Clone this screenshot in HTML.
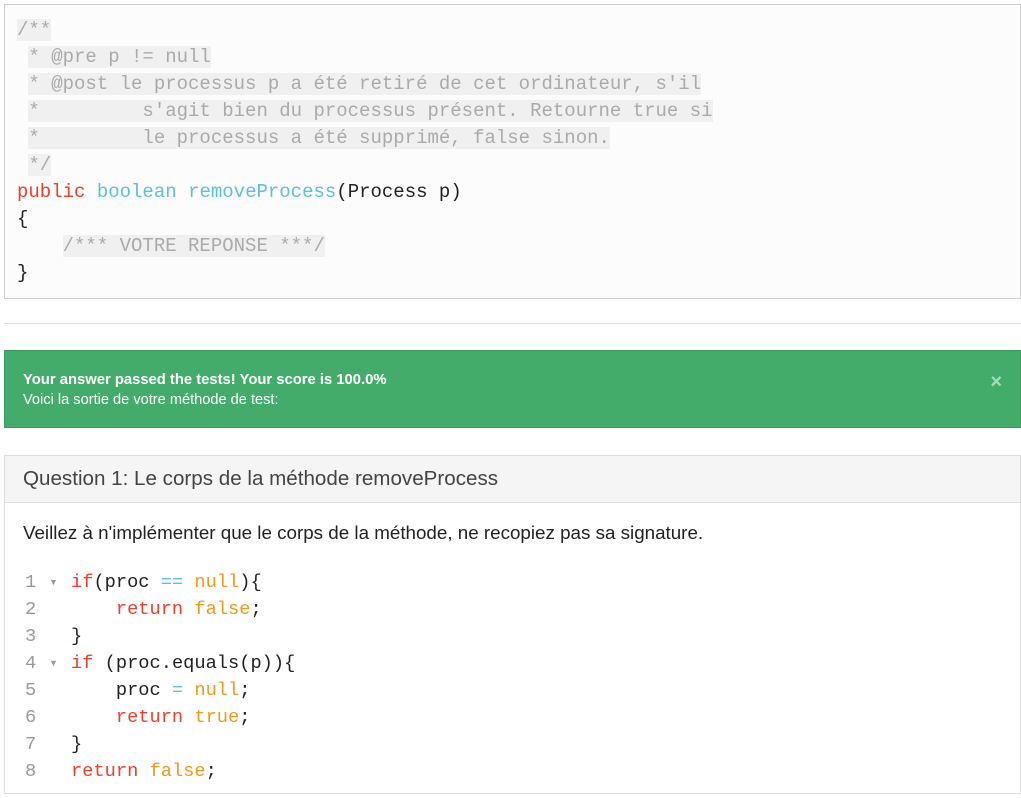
<!DOCTYPE html>
<html><head><meta charset="utf-8"><style>
body{margin:0;width:1021px;height:798px;background:#fff;position:relative;overflow:hidden;font-family:"Liberation Sans",sans-serif}
.mono{font-family:"Liberation Mono","DejaVu Sans Mono",monospace;font-size:19px;white-space:pre}
.m2{font-size:18.7px}
.box{position:absolute;left:4px;top:4px;width:1015px;height:293px;border:1px solid #ccc;background:#fcfcfc}
.l{position:absolute;height:27px;line-height:27px}
.c{color:#aaa;background:#f0f0f0}
.kw{color:#e8402c}.ty{color:#5bc0de}.or{color:#ec9a1c}.tx{color:#222}
hr{position:absolute;left:4px;top:323px;width:1017px;margin:0;border:0;border-top:1px solid #ddd}
.alert{position:absolute;left:4px;top:350px;width:1017px;height:78px;background:#43ac6a;border:1px solid #3c9a5f;box-sizing:border-box;color:#fff}
.panel{position:absolute;left:4px;top:455px;width:1017px;height:339px;border:1px solid #ddd;box-sizing:border-box}
.ph{height:46px;background:#f5f5f5;border-bottom:1px solid #ddd;font-size:20.6px;color:#444;line-height:46px;padding-left:18px}
.n{color:#999}
.ar{position:absolute;font-size:9px;color:#999;left:44px}
</style></head><body>
<div class="box">
<div class="mono l" style="left:12px;top:12px"><span class="c">/**</span></div>
<div class="mono l" style="left:12px;top:39px"> <span class="c">* @pre p != null</span></div>
<div class="mono l" style="left:12px;top:66px"> <span class="c">* @post le processus p a été retiré de cet ordinateur, s'il</span></div>
<div class="mono l" style="left:12px;top:93px"> <span class="c">*         s'agit bien du processus présent. Retourne true si</span></div>
<div class="mono l" style="left:12px;top:120px"> <span class="c">*         le processus a été supprimé, false sinon.</span></div>
<div class="mono l" style="left:12px;top:147px"> <span class="c">*/</span></div>
<div class="mono l" style="left:12px;top:174px"><span class="kw">public</span> <span class="ty">boolean</span> <span class="ty">removeProcess</span><span class="tx">(Process p)</span></div>
<div class="mono l tx" style="left:12px;top:201px">{</div>
<div class="mono l" style="left:12px;top:228px">    <span class="c">/*** VOTRE REPONSE ***/</span></div>
<div class="mono l tx" style="left:12px;top:255px">}</div>
</div>
<hr>
<div class="alert">
<div style="position:absolute;left:18px;top:21px;font-weight:bold;font-size:14.8px">Your answer passed the tests! Your score is 100.0%</div>
<div style="position:absolute;left:18px;top:41px;font-size:14.6px">Voici la sortie de votre méthode de test:</div>
<div style="position:absolute;right:18px;top:20px;font-size:20px;font-weight:bold;color:#a8dcbc">×</div>
</div>
<div class="panel">
<div class="ph">Question 1: Le corps de la méthode removeProcess</div>
<div style="position:absolute;left:18px;top:66px;font-size:18.8px;color:#222">Veillez à n'implémenter que le corps de la méthode, ne recopiez pas sa signature.</div>
<div class="mono m2 l n" style="left:20px;top:113px">1</div><div class="ar" style="top:121px">▼</div>
<div class="mono m2 l" style="left:66px;top:113px"><span class="kw">if</span><span class="tx">(proc </span><span class="ty">==</span> <span class="or">null</span><span class="tx">){</span></div>
<div class="mono m2 l n" style="left:20px;top:140px">2</div>
<div class="mono m2 l" style="left:66px;top:140px">    <span class="kw">return</span> <span class="or">false</span><span class="tx">;</span></div>
<div class="mono m2 l n" style="left:20px;top:167px">3</div>
<div class="mono m2 l tx" style="left:66px;top:167px">}</div>
<div class="mono m2 l n" style="left:20px;top:194px">4</div><div class="ar" style="top:202px">▼</div>
<div class="mono m2 l" style="left:66px;top:194px"><span class="kw">if</span> <span class="tx">(proc.equals(p)){</span></div>
<div class="mono m2 l n" style="left:20px;top:221px">5</div>
<div class="mono m2 l" style="left:66px;top:221px">    <span class="tx">proc </span><span class="ty">=</span> <span class="or">null</span><span class="tx">;</span></div>
<div class="mono m2 l n" style="left:20px;top:248px">6</div>
<div class="mono m2 l" style="left:66px;top:248px">    <span class="kw">return</span> <span class="or">true</span><span class="tx">;</span></div>
<div class="mono m2 l n" style="left:20px;top:275px">7</div>
<div class="mono m2 l tx" style="left:66px;top:275px">}</div>
<div class="mono m2 l n" style="left:20px;top:302px">8</div>
<div class="mono m2 l" style="left:66px;top:302px"><span class="kw">return</span> <span class="or">false</span><span class="tx">;</span></div>
</div>
</body></html>
